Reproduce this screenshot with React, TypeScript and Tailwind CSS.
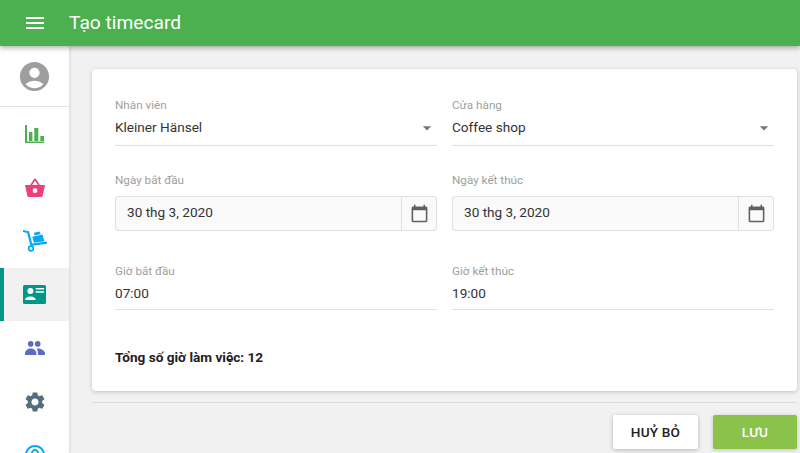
import { ReactNode } from "react";
import {
  MdAccountCircle,
  MdArrowDropDown,
  MdCalendarToday,
  MdHelpOutline,
  MdMenu,
  MdSettings,
} from "react-icons/md";

function ChartIcon() {
  return (
    <svg width="19" height="18" viewBox="0 0 19 18" fill="#4caf50">
      <rect x="0" y="0" width="2" height="18" />
      <rect x="0" y="16.500" width="19" height="1.500" />
      <rect x="4" y="7" width="3.400" height="9" />
      <rect x="9.300" y="3" width="4" height="13" />
      <rect x="15.300" y="11" width="3.700" height="5" />
    </svg>
  );
}

function BasketIcon() {
  return (
    <svg width="20" height="19" viewBox="0 0 20 19">
      <path d="M10 1 L5.500 8 M10 1 L14.500 8" stroke="#ec407a" strokeWidth="1.600" fill="none" />
      <path d="M0 7h20l-2.300 10.800a1.500 1.500 0 0 1-1.500 1.200h-12.400a1.500 1.500 0 0 1-1.500-1.200z" fill="#ec407a" />
      <circle cx="10" cy="12.700" r="2.400" fill="#fff" />
    </svg>
  );
}

function DollyIcon() {
  return (
    <svg width="24" height="22" viewBox="0 0 24 22" fill="#03a9f4">
      <path d="M0 0l6 1.200 3.100 12.400 14.600-2 .3 2.100-16.500 2.200-3.300-13-4.200-.8z" />
      <circle cx="8" cy="18.500" r="2.300" fill="none" stroke="#03a9f4" strokeWidth="1.700" />
      <path d="M9.300 6.800l10.200-2.300 1.900 6.800-10.500 1.500z" />
      <path d="M11 2.800l5.300-1.400 1.500 2.600-6.200 1.500z" />
    </svg>
  );
}

function CardIcon() {
  return (
    <svg width="23" height="19" viewBox="0 0 23 19">
      <rect width="23" height="19" rx="1.500" fill="#009688" />
      <circle cx="7.400" cy="5.900" r="3" fill="#fff" />
      <path d="M2 15c0-2.400 2.700-3.600 5.400-3.600s5.400 1.200 5.400 3.600z" fill="#fff" />
      <rect x="12.700" y="3" width="8.300" height="1.500" fill="#fff" />
      <rect x="12.700" y="6.200" width="8.300" height="1.500" fill="#fff" />
    </svg>
  );
}

function PeopleIcon() {
  return (
    <svg width="20" height="14" viewBox="0 0 20 14" fill="#5c6bc0">
      <circle cx="5.700" cy="2.900" r="2.800" />
      <circle cx="12.700" cy="2.900" r="2.800" />
      <path d="M0 14v-1.500c0-3 2.900-5 5.700-5s5.700 2 5.700 5v1.500z" />
      <path d="M12.700 7.600c3.200 0 7.300 2 7.300 5v1.400h-7v-1.500c0-1.800-.4-3.500-1.300-4.700.3-.1.700-.2 1-.2z" />
    </svg>
  );
}

function NavItem({ children, active }: { children: ReactNode; active?: boolean }) {
  return (
    <div
      className={
        active
          ? "h-[53.6px] flex items-center justify-center border-l-4 border-[#009688] bg-[#f1f1f1] pr-1"
          : "h-[53.6px] flex items-center justify-center"
      }
    >
      {children}
    </div>
  );
}

function Label({ children }: { children: ReactNode }) {
  return <div className="h-4 text-[11.7px] leading-4 text-[#9e9e9e]">{children}</div>;
}

function SelectField({ label, value }: { label: string; value: string }) {
  return (
    <div>
      <Label>{label}</Label>
      <div className="h-[33px] flex justify-between border-b border-[#e0e0e0] text-[13.6px] leading-7 text-[#333]">
        <span>{value}</span>
        <MdArrowDropDown size={20} className="mt-[5px] text-[#757575]" />
      </div>
    </div>
  );
}

function DateField({ label, value }: { label: string; value: string }) {
  return (
    <div className="mt-[26px]">
      <Label>{label}</Label>
      <div className="mt-2 h-[35px] flex items-center rounded-[3px] border border-[#e0e0e0] bg-[#fafafa] text-[13.6px] text-[#333]">
        <span className="flex-1 pl-[11px] pb-[3px]">{value}</span>
        <div className="h-full w-[35px] flex items-center justify-center border-l border-[#e0e0e0]">
          <MdCalendarToday size={19} className="ml-px -mt-px text-[#616161]" />
        </div>
      </div>
    </div>
  );
}

function TimeField({ label, value }: { label: string; value: string }) {
  return (
    <div className="mt-8">
      <Label>{label}</Label>
      <div className="h-[31px] border-b border-[#e0e0e0] text-[13.6px] leading-7 text-[#333]">
        {value}
      </div>
    </div>
  );
}

export default function App() {
  return (
    <div className="h-[453px] w-[800px] overflow-hidden flex flex-col bg-[#f1f1f1] font-['Roboto',sans-serif]">
      <header className="relative z-10 h-[46px] shrink-0 flex items-center bg-[#4caf50] text-white shadow-[0_2px_5px_rgba(0,0,0,0.3)]">
        <div className="w-[69px] flex justify-center">
          <MdMenu size={24} />
        </div>
        <h1 className="text-[19.2px] font-normal">Tạo timecard</h1>
      </header>

      <div className="flex flex-1 min-h-0">
        <aside className="w-[69px] shrink-0 bg-white shadow-[0_0_4px_rgba(0,0,0,0.15)]">
          <div className="h-[61px] flex items-center justify-center border-b border-[#e0e0e0]">
            <MdAccountCircle size={35} className="text-[#9e9e9e]" />
          </div>
          <NavItem>
            <ChartIcon />
          </NavItem>
          <NavItem>
            <BasketIcon />
          </NavItem>
          <NavItem>
            <DollyIcon />
          </NavItem>
          <NavItem active>
            <CardIcon />
          </NavItem>
          <NavItem>
            <PeopleIcon />
          </NavItem>
          <NavItem>
            <MdSettings size={24} className="text-[#546e7a]" />
          </NavItem>
          <NavItem>
            <MdHelpOutline size={24} className="text-[#03a9f4]" />
          </NavItem>
        </aside>

        <main className="flex-1 pt-[23px] pl-[23px] pr-[3px]">
          <section className="rounded-[4px] bg-white px-[23px] pt-7 pb-6 shadow-[0_1px_4px_rgba(0,0,0,0.2)]">
            <div className="grid grid-cols-2 gap-x-[15px]">
              <SelectField label="Nhân viên" value="Kleiner Hänsel" />
              <SelectField label="Cửa hàng" value="Coffee shop" />
              <DateField label="Ngày bắt đầu" value="30 thg 3, 2020" />
              <DateField label="Ngày kết thúc" value="30 thg 3, 2020" />
              <TimeField label="Giờ bắt đầu" value="07:00" />
              <TimeField label="Giờ kết thúc" value="19:00" />
            </div>
            <div className="mt-[37px] h-5 text-[13.6px] leading-5 font-bold text-[#212121]">
              Tổng số giờ làm việc: 12
            </div>
          </section>

          <div className="mt-[11px] border-t border-[#dcdcdc]" />

          <div className="mt-3 flex justify-end gap-[15px]">
            <button className="h-[34px] w-[85px] rounded-[2px] bg-white text-[13.6px] tracking-[0.2px] font-medium text-[#212121] shadow-[0_1px_4px_rgba(0,0,0,0.25)]">
              HUỶ BỎ
            </button>
            <button className="h-[34px] w-[84px] rounded-[2px] bg-[#8bc34a] text-[13.6px] tracking-[0.2px] font-medium text-white shadow-[0_1px_4px_rgba(0,0,0,0.2)]">
              LƯU
            </button>
          </div>
        </main>
      </div>
    </div>
  );
}
